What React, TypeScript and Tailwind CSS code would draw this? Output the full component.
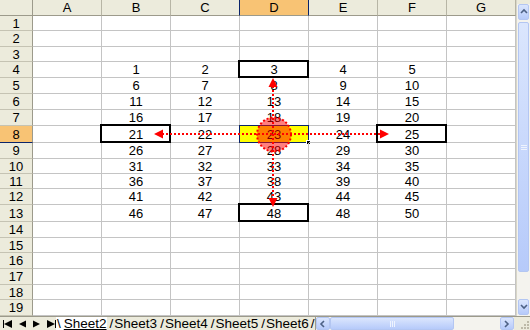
import React from "react";

const cols = ["A", "B", "C", "D", "E", "F", "G"];
const rowHeights = [15, 16, 15, 16, 16, 16, 16, 17, 16, 15, 15, 16, 17, 16, 15, 16, 16, 15, 16];
const boxed = ["3-4", "1-8", "5-8", "3-13"];

const cellValue = (row: number, col: number) => {
  if (row < 4 || row > 13 || col < 1 || col > 5) return "";
  if (row === 13 && col === 4) return "48";
  return String((row - 4) * 5 + col);
};

const Arrow = ({ dir }: { dir: "up" | "down" | "left" | "right" }) => {
  const pts = {
    up: "0,8 4,0 8,8",
    down: "0,0 4,8 8,0",
    left: "8,0 0,4 8,8",
    right: "0,0 8,4 0,8",
  }[dir];
  return (
    <svg width="8" height="8" viewBox="0 0 8 8" className="block">
      <polygon points={pts} fill="#000" />
    </svg>
  );
};

const XpButton = ({ children, className = "" }: { children: React.ReactNode; className?: string }) => (
  <div
    className={
      "flex items-center justify-center rounded-[2px] border border-[#b3c6f2] bg-gradient-to-b from-[#dbe6fd] to-[#b6cafa] text-[#4b6088] " +
      className
    }
  >
    {children}
  </div>
);

const Chevron = ({ dir }: { dir: "up" | "down" | "left" | "right" }) => {
  const d = {
    up: "M1 5 L4 2 L7 5",
    down: "M1 2 L4 5 L7 2",
    left: "M5 1 L2 4 L5 7",
    right: "M2 1 L5 4 L2 7",
  }[dir];
  return (
    <svg width="8" height="8" viewBox="0 0 8 8">
      <path d={d} stroke="#4d6185" strokeWidth="1.6" fill="none" />
    </svg>
  );
};

const Grip = ({ vertical }: { vertical?: boolean }) => (
  <div className={"flex gap-[1px] " + (vertical ? "flex-col" : "flex-row")}>
    {[0, 1, 2].map((i) => (
      <div key={i} className={vertical ? "h-px w-[6px] bg-[#eef3fe]" : "h-[6px] w-px bg-[#eef3fe]"} />
    ))}
  </div>
);

export default function App() {
  return (
    <div className="w-[530px] h-[330px] overflow-hidden bg-white font-['Liberation_Sans',Arial,sans-serif] text-[13px] text-black select-none">
      <div className="flex h-[316px]">
        {/* sheet grid */}
        <div className="relative w-[516px]">
          <div className="flex h-[16px]">
            <div className="w-[33px] box-border border-r border-b border-[#9c9a8b] bg-[#ecebdc]" />
            {cols.map((c) => (
              <div
                key={c}
                className={
                  "w-[69px] box-border border-b flex items-center justify-center leading-none " +
                  (c === "D"
                    ? "bg-[#f8c374] border-b-[#9c9a8b] border-x border-x-[#0a246a] w-[70px] -ml-px"
                    : "bg-[#ecebdc] border-r border-[#b7b5a5] border-b-[#9c9a8b]")
                }
              >
                {c}
              </div>
            ))}
          </div>
          {rowHeights.map((h, i) => {
            const row = i + 1;
            return (
              <div key={row} className="flex" style={{ height: h }}>
                <div
                  className={
                    "w-[33px] box-border border-r border-b flex items-center justify-center leading-none " +
                    (row === 8
                      ? "bg-[#f8c374] border-r-[#9c9a8b] border-b-[#0a246a]"
                      : "bg-[#ecebdc] border-[#9c9a8b] border-b-[#c5c3b3]")
                  }
                >
                  {row}
                </div>
                {cols.map((c, ci) => {
                  const active = row === 8 && c === "D";
                  const isBoxed = boxed.includes(`${ci}-${row}`);
                  return (
                    <div
                      key={c}
                      className={
                        "relative w-[69px] box-border border-r border-b border-[#c4c4c4] flex items-center justify-center leading-none " +
                        (active ? "bg-[#ffff00]" : "")
                      }
                    >
                      {cellValue(row, ci)}
                      {isBoxed && <div className="absolute -left-[2px] -top-[2px] -right-px -bottom-px border-2 border-black" />}
                      {active && (
                        <>
                          <div className="absolute -left-px -top-px -right-px -bottom-px border border-[#0a246a]" />
                          <div className="absolute -right-[3px] -bottom-[3px] w-[5px] h-[5px] bg-black border border-white" />
                        </>
                      )}
                    </div>
                  );
                })}
              </div>
            );
          })}
          {/* overlay: circle and arrows */}
          <svg className="absolute left-0 top-0 pointer-events-none" width="516" height="316">
            <g stroke="#ff0000" strokeWidth="2" strokeDasharray="2 2" fill="none">
              <line x1="273" y1="86" x2="273" y2="200" />
              <line x1="162" y1="134" x2="381" y2="134" />
            </g>
            <circle cx="274" cy="134.5" r="17" fill="rgba(255,0,0,0.5)" stroke="#ff0000" strokeWidth="2" strokeDasharray="2 2" />
            <g fill="#ff0000">
              <polygon points="273,78 268.5,87 277.5,87" />
              <polygon points="273,207 268.5,198 277.5,198" />
              <polygon points="154,134 163,129.5 163,138.5" />
              <polygon points="389,134 380,129.5 380,138.5" />
            </g>
          </svg>
        </div>
        {/* vertical scrollbar */}
        <div className="w-[14px] flex flex-col bg-[#f4f3ee] border-l border-[#d8d6c8]">
          <div className="h-[4px] bg-[#ecebdc]" />
          <XpButton className="h-[16px] mx-px">
            <Chevron dir="up" />
          </XpButton>
          <div className="h-[2px]" />
          <XpButton className="h-[250px] mx-px">
            <Grip vertical />
          </XpButton>
          <div className="flex-1" />
          <XpButton className="h-[16px] mx-px mb-px">
            <Chevron dir="down" />
          </XpButton>
        </div>
      </div>
      {/* tab bar */}
      <div className="flex h-[14px] items-center bg-[#ecebdc] border-t border-[#9c9a8b]">
        <div className="flex w-[56px] items-center gap-[7px] pl-[3px]">
          <div className="flex items-center">
            <div className="w-px h-[8px] bg-black" />
            <Arrow dir="left" />
          </div>
          <Arrow dir="left" />
          <Arrow dir="right" />
          <div className="flex items-center">
            <Arrow dir="right" />
            <div className="w-px h-[8px] bg-black" />
          </div>
        </div>
        <div className="flex w-[259px] items-center h-full leading-none text-[13.5px] whitespace-nowrap overflow-hidden">
          <span className="bg-white h-full flex items-center pl-[1px]">
            <span>\</span>
            <span className="underline pl-[3px]">Sheet2</span>
          </span>
          <span className="pl-[3px] pr-[1px]">/</span>
          <span>Sheet3</span>
          <span className="pl-[3px] pr-[1px]">/</span>
          <span>Sheet4</span>
          <span className="pl-[3px] pr-[1px]">/</span>
          <span>Sheet5</span>
          <span className="pl-[3px] pr-[1px]">/</span>
          <span>Sheet6</span>
          <span className="pl-[2px]">/</span>
        </div>
        <div className="flex flex-1 h-full items-center bg-[#f4f3ee] border-l border-[#9c9a8b]">
          <XpButton className="w-[14px] h-[13px]">
            <Chevron dir="left" />
          </XpButton>
          <XpButton className="w-[124px] h-[13px]">
            <Grip />
          </XpButton>
          <div className="flex-1" />
          <XpButton className="w-[14px] h-[13px]">
            <Chevron dir="right" />
          </XpButton>
        </div>
        <div className="w-[16px] h-full bg-[#ecebdc] flex items-end justify-end p-px">
          <svg width="10" height="10" viewBox="0 0 10 10">
            <g fill="#bdbaa8">
              <rect x="8" y="2" width="2" height="2" />
              <rect x="5" y="5" width="2" height="2" />
              <rect x="8" y="5" width="2" height="2" />
              <rect x="2" y="8" width="2" height="2" />
              <rect x="5" y="8" width="2" height="2" />
              <rect x="8" y="8" width="2" height="2" />
            </g>
          </svg>
        </div>
      </div>
    </div>
  );
}
